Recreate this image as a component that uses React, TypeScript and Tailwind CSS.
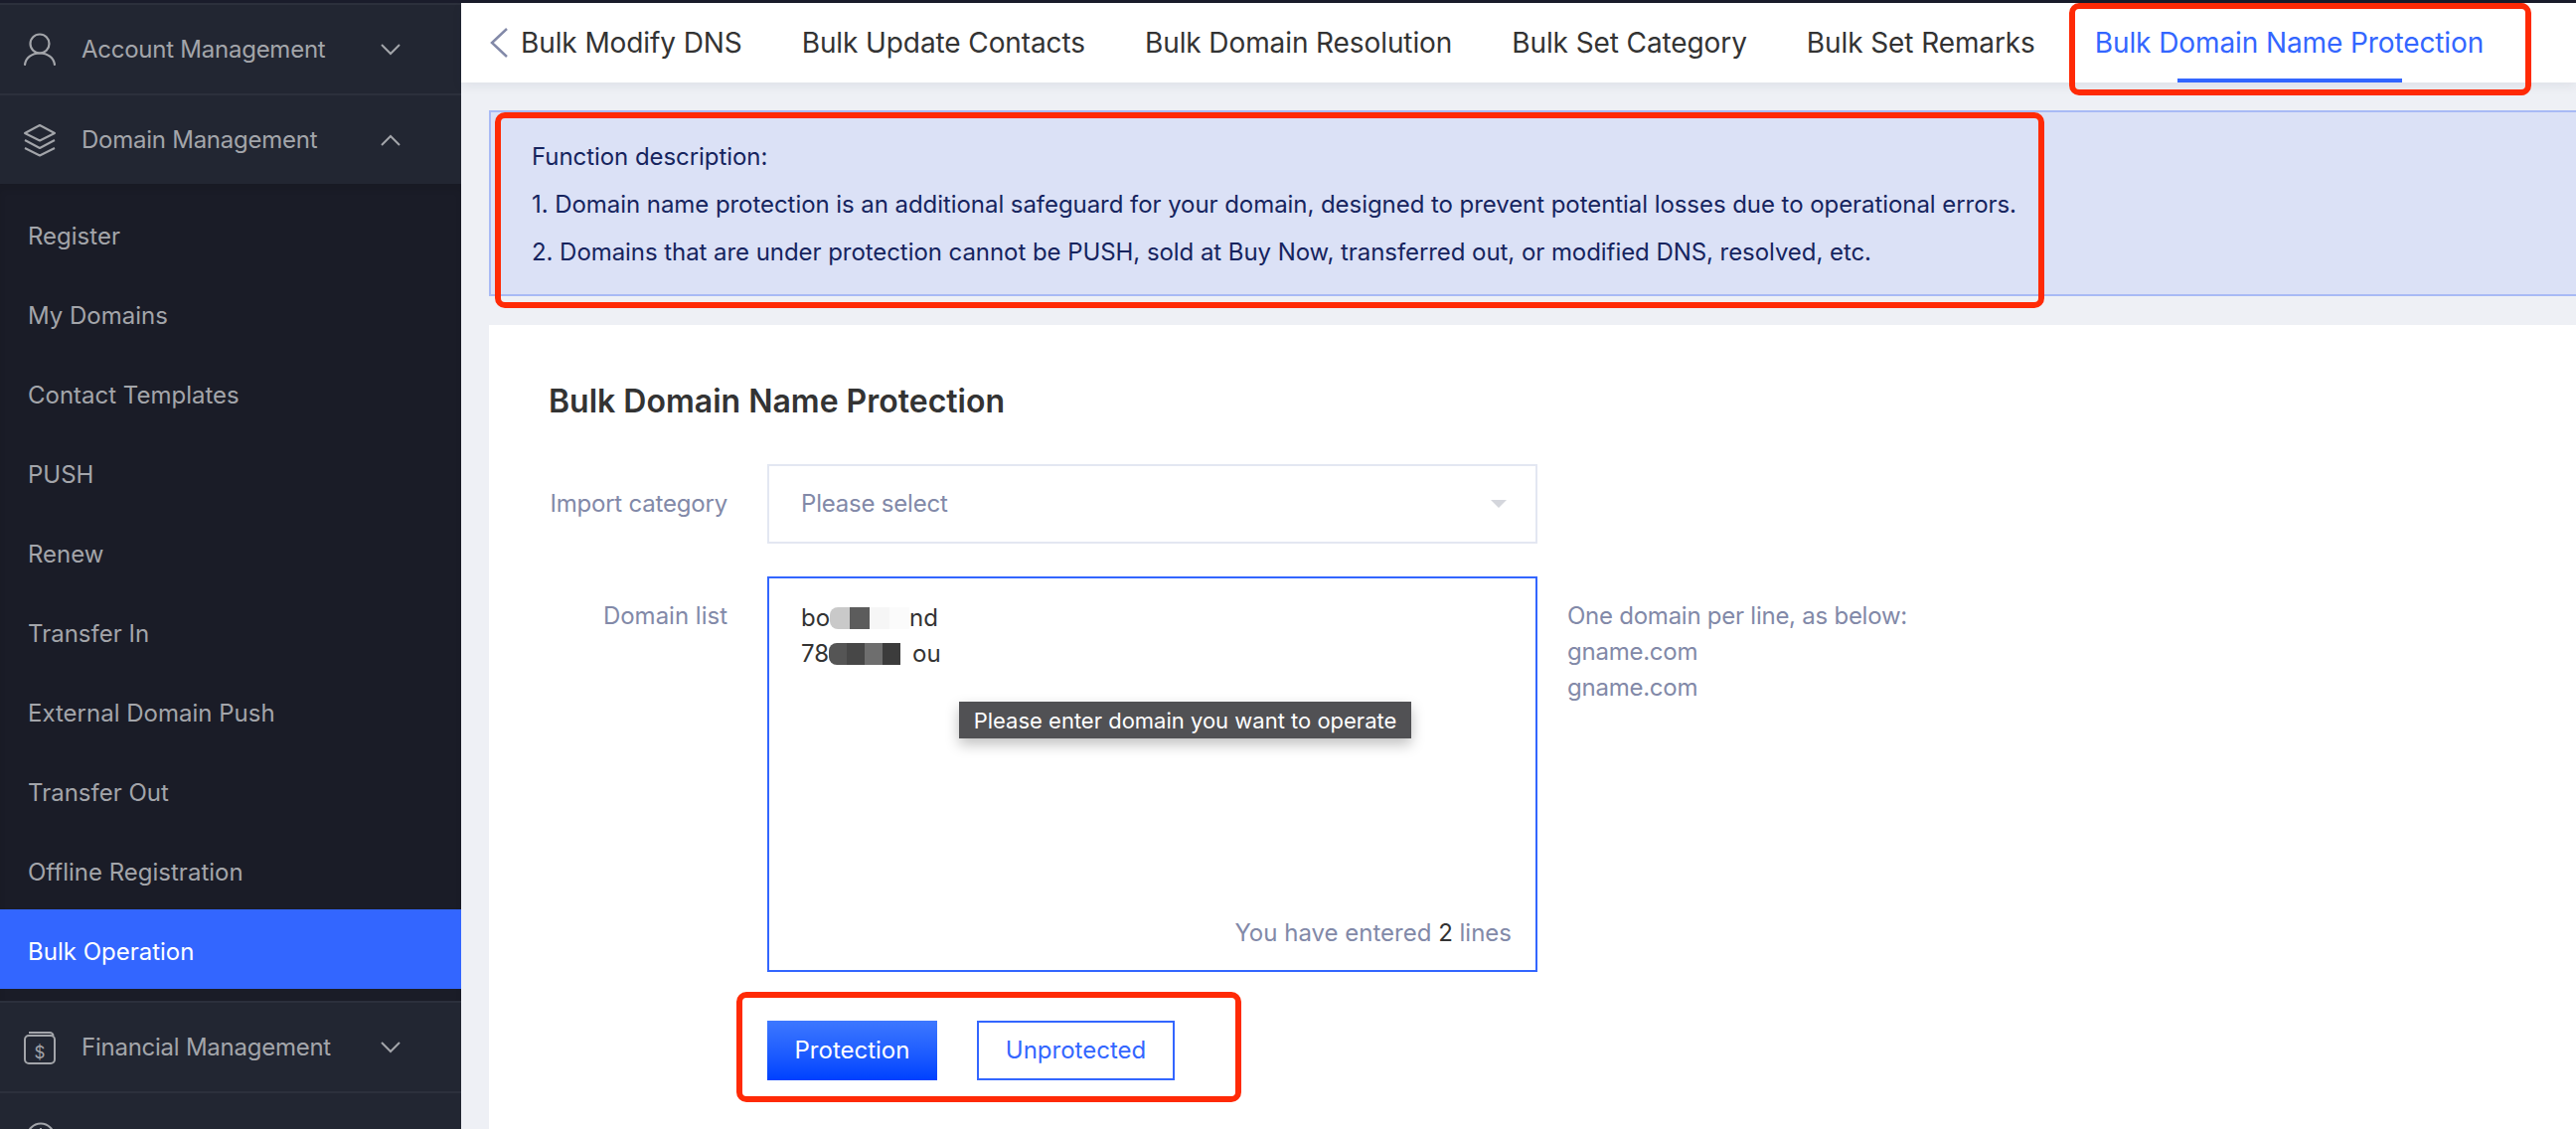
import type { ReactNode } from 'react'

const subItems = [
  'Register',
  'My Domains',
  'Contact Templates',
  'PUSH',
  'Renew',
  'Transfer In',
  'External Domain Push',
  'Transfer Out',
  'Offline Registration',
]

const tabs = ['Bulk Modify DNS', 'Bulk Update Contacts', 'Bulk Domain Resolution', 'Bulk Set Category', 'Bulk Set Remarks']

function Chevron({ up }: { up?: boolean }) {
  return (
    <svg width="22" height="14" viewBox="0 0 22 14" fill="none" stroke="#a3a5aa" strokeWidth="2">
      <path d={up ? 'M2 12L11 3L20 12' : 'M2 2L11 11L20 2'} />
    </svg>
  )
}

function UserIcon() {
  return (
    <svg width="34" height="34" viewBox="0 0 34 34" fill="none" stroke="#a3a5aa" strokeWidth="2.2" strokeLinecap="round">
      <circle cx="17" cy="11" r="9.5" />
      <path d="M2 32C3 25 9 20.5 17 20.5C25 20.5 31 25 32 32" />
    </svg>
  )
}

function LayersIcon() {
  return (
    <svg width="34" height="34" viewBox="0 0 34 34" fill="none" stroke="#a3a5aa" strokeWidth="2" strokeLinejoin="round">
      <path d="M17 2L32 10L17 17.5L2 10Z" />
      <path d="M2 17L17 25L32 17" />
      <path d="M2 25L17 32.5L32 25" />
    </svg>
  )
}

function WalletIcon() {
  return (
    <svg width="34" height="34" viewBox="0 0 34 34" fill="none" stroke="#a3a5aa" strokeWidth="2">
      <rect x="2" y="5" width="30" height="28" rx="4" />
      <path d="M6 2H27C29 2 30.5 3.5 30.5 5" />
      <text x="17" y="28" textAnchor="middle" fontSize="17" fill="#a3a5aa" stroke="none" fontFamily="Inter, sans-serif">$</text>
    </svg>
  )
}

function GroupRow({ icon, label, up }: { icon: ReactNode; label: string; up?: boolean }) {
  return (
    <div className="flex h-[91px] shrink-0 items-center border-t-2 border-[#2c303c] bg-[#222632] pl-[23px] text-[#a3a5aa]">
      <div className="flex w-[59px] shrink-0">{icon}</div>
      <div className="w-[300px] shrink-0 text-[24px] tracking-[-0.25px]">{label}</div>
      <Chevron up={up} />
    </div>
  )
}

function Sidebar() {
  return (
    <aside className="flex h-full w-[464px] shrink-0 flex-col overflow-hidden bg-[#222632]">
      <GroupRow icon={<UserIcon />} label="Account Management" />
      <GroupRow icon={<LayersIcon />} label="Domain Management" up />
      <div className="h-[822px] shrink-0 bg-[#1a1c27] pt-[10px] shadow-[inset_0_6px_6px_rgba(0,0,0,0.08)]">
        {subItems.map((item) => (
          <div key={item} className="flex h-[80px] items-center pl-[28px] pt-[5px] text-[24px] text-[#a3a5aa]">
            {item}
          </div>
        ))}
        <div className="flex h-[80px] items-center bg-[#3366ff] pl-[28px] pt-[5px] text-[24px] text-white">Bulk Operation</div>
      </div>
      <GroupRow icon={<WalletIcon />} label="Financial Management" />
      <div className="flex border-t-2 border-[#2c303c] pl-[26px] pt-[29px]">
        <svg width="30" height="30" viewBox="0 0 30 30" fill="none" stroke="#a3a5aa" strokeWidth="2">
          <circle cx="15" cy="15" r="13.5" />
          <path d="M15 6V16" />
        </svg>
      </div>
    </aside>
  )
}

function TabBar() {
  return (
    <div className="flex h-[80px] shrink-0 items-center bg-white pl-[28px] shadow-[0_4px_10px_rgba(30,40,70,0.07)]">
      <svg width="20" height="32" viewBox="0 0 20 32" fill="none" stroke="#8289a8" strokeWidth="2.5" className="mr-[12px]">
        <path d="M18 2L3 16L18 30" />
      </svg>
      <div className="flex items-center gap-[60px] text-[28px] tracking-[-0.1px] text-[#333]">
        {tabs.map((tab) => (
          <span key={tab}>{tab}</span>
        ))}
        <span className="relative text-[#3366ff]">
          Bulk Domain Name Protection
          <span className="absolute bottom-[-19px] left-[83px] h-[4px] w-[226px] bg-[#3366ff]" />
        </span>
      </div>
    </div>
  )
}

function Notice() {
  return (
    <div className="ml-[28px] mt-[28px] flex h-[187px] shrink-0 flex-col justify-center gap-[24px] border-y-2 border-l-2 border-[#a8baf5] bg-[#dbe1f6] pl-[41px] pt-[2px] text-[24px] leading-[24px] tracking-[-0.06px] text-[#16245e]">
      <p>Function description:</p>
      <p>1. Domain name protection is an additional safeguard for your domain, designed to prevent potential losses due to operational errors.</p>
      <p>2. Domains that are under protection cannot be PUSH, sold at Buy Now, transferred out, or modified DNS, resolved, etc.</p>
    </div>
  )
}

function Blur({ colors, cell }: { colors: string[]; cell: string }) {
  return (
    <span className="inline-flex h-[22px] overflow-hidden rounded-l-[8px]">
      {colors.map((c, i) => (
        <span key={i} className={`h-full ${cell}`} style={{ backgroundColor: c }} />
      ))}
    </span>
  )
}

function DomainList() {
  return (
    <div className="relative h-[398px] w-[775px] shrink-0 border-2 border-[#3366ff] bg-white pl-[32px] pt-[22px] text-[24px] leading-[36px] text-[#333]">
      <div className="flex items-center">
        bo
        <Blur colors={['#c9c9c9', '#5c5c5c', '#f6f6f6', '#fbfbfb']} cell="w-[20px]" />
        nd
      </div>
      <div className="flex items-center">
        78
        <Blur colors={['#555555', '#474747', '#6e6e6e', '#3c3c3c']} cell="w-[18px]" />
        <span className="ml-[12px]">ou</span>
      </div>
      <div className="absolute bottom-[19px] right-[24px] text-[#8289a8]">
        You have entered <span className="text-[#333]">2</span> lines
      </div>
      <div className="absolute left-[191px] top-[124px] flex h-[37px] w-[455px] items-center justify-center bg-[#515154] text-[22px] text-white shadow-[0_6px_14px_rgba(0,0,0,0.25)]">
        Please enter domain you want to operate
      </div>
    </div>
  )
}

function FormCard() {
  return (
    <div className="ml-[28px] mt-[29px] flex flex-1 flex-col bg-white pl-[60px] pt-[58px]">
      <h2 className="text-[32px] font-semibold leading-[38px] text-[#333]">Bulk Domain Name Protection</h2>
      <div className="mt-[44px] flex items-center">
        <label className="w-[180px] whitespace-nowrap text-right text-[24px] tracking-[-0.2px] text-[#8289a8]">Import category</label>
        <div className="ml-[40px] flex h-[80px] w-[775px] items-center justify-between border-2 border-[#e3e7f2] pl-[32px] pr-[29px] text-[24px] tracking-[-0.2px] text-[#8289a8]">
          Please select
          <span className="h-0 w-0 border-x-[8px] border-t-[8px] border-x-transparent border-t-[#d4d6dc]" />
        </div>
      </div>
      <div className="mt-[33px] flex">
        <label className="w-[180px] pt-[22px] text-right text-[24px] leading-[36px] text-[#8289a8]">Domain list</label>
        <div className="ml-[40px]">
          <DomainList />
        </div>
        <div className="ml-[30px] pt-[22px] text-[24px] leading-[36px] tracking-[-0.25px] text-[#8289a8]">
          <p>One domain per line, as below:</p>
          <p>gname.com</p>
          <p>gname.com</p>
        </div>
      </div>
      <div className="ml-[220px] mt-[49px] flex gap-[40px] text-[24px]">
        <button className="h-[60px] w-[171px] bg-gradient-to-b from-[#3d77ff] to-[#0040ff] text-white">Protection</button>
        <button className="h-[60px] w-[199px] border-2 border-[#3366ff] text-[#3366ff]">Unprotected</button>
      </div>
    </div>
  )
}

export default function App() {
  return (
    <div className="relative flex h-[1136px] w-[2592px] flex-col overflow-hidden bg-[#eef0f5] font-['Inter',sans-serif]">
      <div className="h-[3px] shrink-0 bg-[#1a1c2b]" />
      <div className="flex min-h-0 flex-1">
        <Sidebar />
        <main className="flex min-w-0 flex-1 flex-col">
          <TabBar />
          <Notice />
          <FormCard />
        </main>
      </div>
      {/* red annotation boxes drawn on top of the screenshot */}
      <div className="absolute left-[498px] top-[113px] h-[197px] w-[1559px] rounded-[10px] border-[6px] border-[#ff2a06]" />
      <div className="absolute left-[2082px] top-[3px] h-[93px] w-[465px] rounded-[10px] border-[6px] border-[#ff2a06]" />
      <div className="absolute left-[741px] top-[998px] h-[111px] w-[508px] rounded-[10px] border-[6px] border-[#ff2a06]" />
    </div>
  )
}
